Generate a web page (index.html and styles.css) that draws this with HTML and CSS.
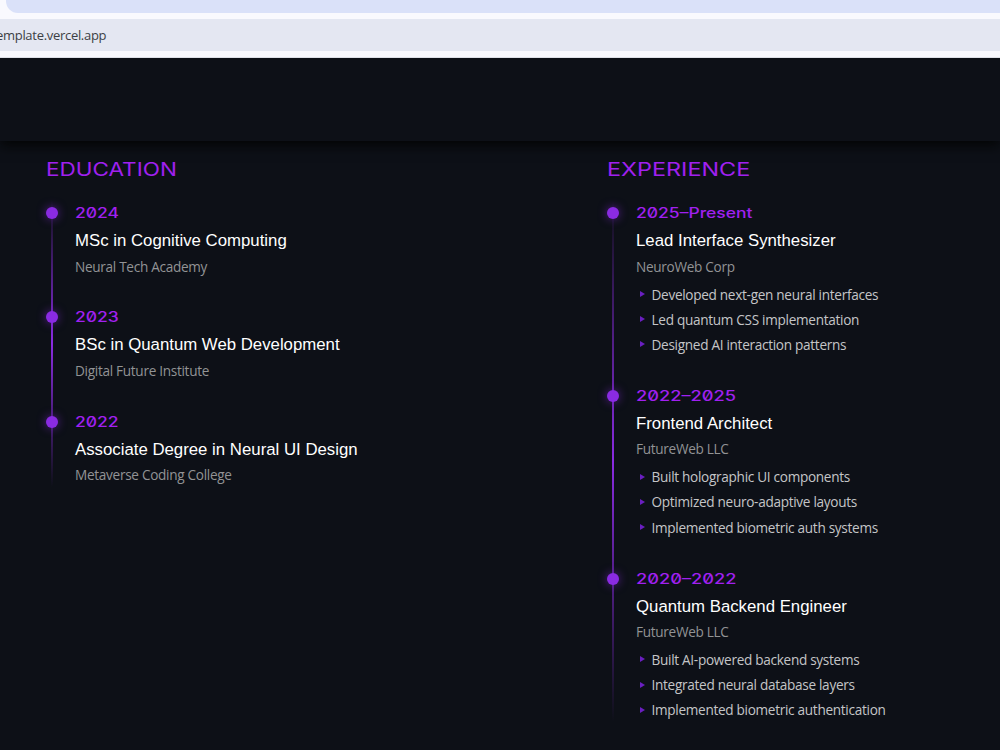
FILE: index.html
```html
<!DOCTYPE html>
<html lang="en">
<head>
  <meta charset="UTF-8">
  <title>Resume</title>
  <link rel="stylesheet" href="styles.css">
</head>
<body>
  <div class="browser">
    <div class="tab-strip"></div>
    <div class="address-bar"><span class="url">emplate.vercel.app</span></div>
  </div>

  <header class="top-panel"></header>

  <main class="resume">
    <section class="education">
      <h2><span class="wide">EDUCATION</span></h2>
      <div class="timeline">
        <div class="item">
          <div class="year"><span class="wide">2024</span></div>
          <h3>MSc in Cognitive Computing</h3>
          <p class="place">Neural Tech Academy</p>
        </div>
        <div class="item">
          <div class="year"><span class="wide">2023</span></div>
          <h3>BSc in Quantum Web Development</h3>
          <p class="place">Digital Future Institute</p>
        </div>
        <div class="item">
          <div class="year"><span class="wide">2022</span></div>
          <h3>Associate Degree in Neural UI Design</h3>
          <p class="place">Metaverse Coding College</p>
        </div>
      </div>
    </section>

    <section class="experience">
      <h2><span class="wide extra">EXPERIENCE</span></h2>
      <div class="timeline">
        <div class="item">
          <div class="year"><span class="wide">2025–Present</span></div>
          <h3>Lead Interface Synthesizer</h3>
          <p class="place">NeuroWeb Corp</p>
          <ul>
            <li>Developed next-gen neural interfaces</li>
            <li>Led quantum CSS implementation</li>
            <li>Designed AI interaction patterns</li>
          </ul>
        </div>
        <div class="item">
          <div class="year"><span class="wide extra">2022–2025</span></div>
          <h3>Frontend Architect</h3>
          <p class="place">FutureWeb LLC</p>
          <ul>
            <li>Built holographic UI components</li>
            <li>Optimized neuro-adaptive layouts</li>
            <li>Implemented biometric auth systems</li>
          </ul>
        </div>
        <div class="item">
          <div class="year"><span class="wide extra">2020–2022</span></div>
          <h3>Quantum Backend Engineer</h3>
          <p class="place">FutureWeb LLC</p>
          <ul>
            <li>Built AI-powered backend systems</li>
            <li>Integrated neural database layers</li>
            <li>Implemented biometric authentication</li>
          </ul>
        </div>
      </div>
    </section>
  </main>
</body>
</html>
```
FILE: styles.css
```css
body {
  margin: 0;
  height: 750px;
  overflow: hidden;
  background: #0d1017;
  color: #fff;
  font-family: 'Open Sans', sans-serif;
}

.browser {
  position: relative;
  z-index: 1;
  height: 57px;
  background: #f9f9fe;
  border-bottom: 1px solid #dfe1e8;
}

.tab-strip {
  height: 13px;
  margin-left: 6px;
  background: #dae1f9;
  border-bottom-left-radius: 12px;
}

.address-bar {
  height: 32px;
  margin-top: 6px;
  background: #e4e7f2;
  color: #3c3f45;
  font-size: 13px;
  letter-spacing: -0.3px;
  line-height: 33px;
  white-space: nowrap;
}

.url {
  margin-left: -4px;
}

.top-panel {
  height: 83px;
  box-shadow: 0 4px 12px #030404;
}

.resume {
  display: grid;
  grid-template-columns: 561px 1fr;
  padding: 16px 0 0 46px;
}

h2, h3, p, ul {
  margin: 0;
}

h2 {
  height: 26px;
  margin-bottom: 17.2px;
  font-family: 'Inter', sans-serif;
  font-size: 18px;
  font-weight: 400;
  line-height: 26px;
  color: #a020f0;
}

.wide {
  display: inline-block;
  transform: scaleX(1.25);
  transform-origin: left;
  font-feature-settings: 'zero';
}

.wide.extra {
  transform: scaleX(1.3);
}

.timeline {
  position: relative;
  padding-left: 29px;
}

.timeline::before {
  content: '';
  position: absolute;
  top: 0;
  bottom: 0;
  left: 5px;
  width: 2px;
  background: linear-gradient(to bottom, transparent, #8a2be2, transparent);
}

.item {
  position: relative;
  margin-bottom: 25.8px;
}

.item:last-child {
  margin-bottom: 0;
}

.item::before {
  content: '';
  position: absolute;
  top: 7px;
  left: -29px;
  width: 12px;
  height: 12px;
  border-radius: 50%;
  background: #8a2be2;
  box-shadow: 0 0 10px rgba(138, 43, 226, 0.6);
}

.year {
  height: 26px;
  font-family: 'Inter', sans-serif;
  font-size: 14px;
  font-weight: 500;
  line-height: 26px;
  color: #a020f0;
}

h3 {
  height: 28.5px;
  font-family: 'Liberation Sans', sans-serif;
  font-size: 16.8px;
  font-weight: 400;
  line-height: 29px;
}

.place {
  height: 24px;
  font-size: 13.6px;
  letter-spacing: -0.3px;
  line-height: 23px;
  color: #929395;
}

ul {
  margin-top: 2.8px;
  padding: 0;
  list-style: none;
}

li {
  display: flex;
  align-items: center;
  height: 25.2px;
  padding-left: 4px;
  font-size: 13.6px;
  letter-spacing: -0.3px;
  color: #c4c5c7;
}

li::before {
  content: '';
  margin-right: 6.5px;
  border-left: 5px solid #6a1fc0;
  border-top: 3px solid transparent;
  border-bottom: 3px solid transparent;
}
```
